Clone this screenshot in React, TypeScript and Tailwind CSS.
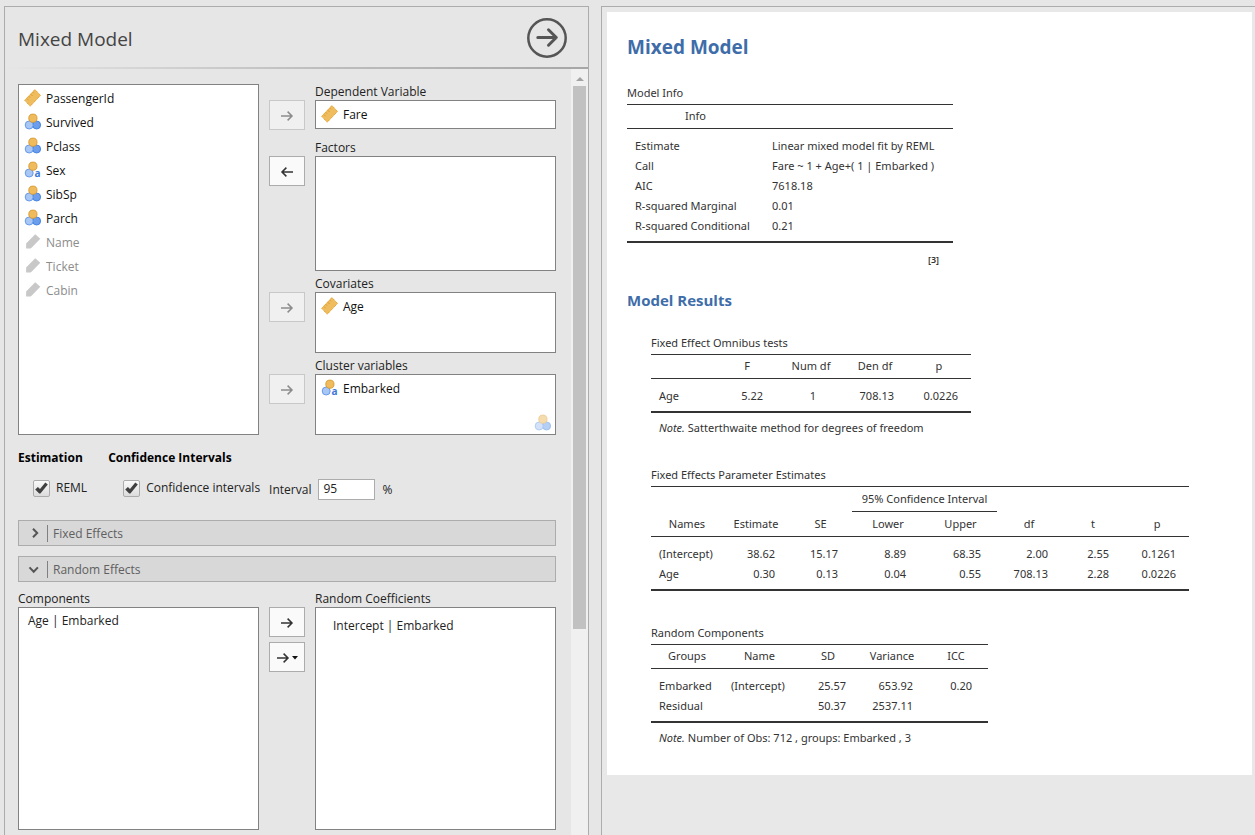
import type { ReactNode } from "react";

type Kind = "ruler" | "circles" | "text" | "pencil";

function VarIcon({ kind }: { kind: Kind }) {
  if (kind === "ruler") {
    return (
      <svg width="17" height="18" viewBox="0 0 17 18" aria-hidden="true">
        <path d="M10.9 0.6 16.5 6.4 6.2 17.2 0.7 11.3Z" fill="#f0bd5e" stroke="#e3a02f" strokeWidth="1" strokeDasharray="1.4 0.6" />
        <path d="M2.8 9.4l1.8 1.8M4.8 7.2l1.3 1.4M6.8 5.2l1.8 1.8M8.8 3.1l1.3 1.3" stroke="#d8982c" strokeWidth="0.9" />
      </svg>
    );
  }
  if (kind === "pencil") {
    return (
      <svg width="17" height="18" viewBox="0 0 17 18" aria-hidden="true">
        <path d="M11.2 1.2 16.3 5.7 7.8 14.6 6.5 15.4H2.1V10.6Z" fill="#c8c8c8" />
      </svg>
    );
  }
  return (
    <svg width="17" height="18" viewBox="0 0 17 18" className="overflow-visible" aria-hidden="true">
      {kind === "circles" && <circle cx="12.6" cy="12" r="4" fill="#6d9eeb" stroke="#3c7fe0" strokeWidth="0.9" />}
      <circle cx="5.2" cy="12" r="4" fill="#a9c7f5" stroke="#5b93ea" strokeWidth="0.9" />
      <circle cx="8.9" cy="5.2" r="4.1" fill="#efbb5c" stroke="#d89a30" strokeWidth="0.9" />
      {kind === "text" && (
        <text x="10.6" y="15.6" fontSize="10" fontWeight="700" fill="#3c78d8" fontFamily="Open Sans, sans-serif">
          a
        </text>
      )}
    </svg>
  );
}

function VarItem({ kind, name, muted = false }: { kind: Kind; name: string; muted?: boolean }) {
  return (
    <li className={muted ? "flex h-6 items-center gap-[5px] text-[#8c8c8c]" : "flex h-6 items-center gap-[5px] text-[#111111]"}>
      <span className="-mt-[3px]">
        <VarIcon kind={kind} />
      </span>
      {name}
    </li>
  );
}

function Arrow() {
  return (
    <svg width="14" height="12" viewBox="0 0 14 12" fill="none" stroke="currentColor" strokeWidth="1.5" aria-hidden="true">
      <path d="M1 6H12M7.6 1.6 12 6 7.6 10.4" />
    </svg>
  );
}

function MoveButton({ label, disabled = false, back = false, menu = false }: { label: string; disabled?: boolean; back?: boolean; menu?: boolean }) {
  return (
    <button
      type="button"
      aria-label={label}
      disabled={disabled}
      className={
        disabled
          ? "flex h-[30px] w-9 shrink-0 items-center justify-center border border-[#c8c8c8] bg-[#f0f0f0] pt-[2px] text-[#8c8c8c]"
          : "flex h-[30px] w-9 shrink-0 items-center justify-center gap-[2px] border border-[#acacac] bg-[#fafafa] pt-[2px] text-[#333333]"
      }
    >
      <span className={back ? "rotate-180" : ""}>
        <Arrow />
      </span>
      {menu && (
        <svg width="6" height="4" viewBox="0 0 6 4" aria-hidden="true">
          <path d="M0 0H6L3 3.5Z" fill="#111111" />
        </svg>
      )}
    </button>
  );
}

function Target({ label, box, back = false, children }: { label: string; box: string; back?: boolean; children?: ReactNode }) {
  return (
    <div className="flex items-start gap-[10px]">
      <div className="pt-4">
        <MoveButton label={"Move to " + label} disabled={!back} back={back} />
      </div>
      <div className="min-w-0 flex-1">
        <h2 className="h-4 leading-4">{label}</h2>
        <ul className={"relative border border-[#828282] bg-white pt-[2px] pl-[5px] " + box}>{children}</ul>
      </div>
    </div>
  );
}

function Tick({ label }: { label: string }) {
  return (
    <label className="flex items-center gap-[6px]">
      <span className="relative flex h-[17px] w-[17px]">
        <input type="checkbox" defaultChecked className="peer h-[17px] w-[17px] appearance-none rounded-[2px] border border-[#acacac] bg-linear-to-b from-[#fafafa] to-[#dcdcdc]" />
        <svg className="pointer-events-none absolute inset-0 hidden peer-checked:block" width="17" height="17" viewBox="0 0 17 17" aria-hidden="true">
          <path d="M2.2 9.4 4.9 6.9 7 8.9 12.3 2.6 14.8 4.6 7.4 13.6H6.2Z" fill="#404040" />
        </svg>
      </span>
      {label}
    </label>
  );
}

function Section({ title, open = false }: { title: string; open?: boolean }) {
  return (
    <button type="button" aria-expanded={open} className="flex h-[26px] w-full items-center border border-[#acacac] bg-[#d8d8d8] pl-[9px] text-left text-[#606060]">
      <svg width="14" height="12" viewBox="0 0 14 12" fill="none" stroke="#555555" strokeWidth="2" aria-hidden="true">
        {open ? <path d="M1.5 4.4 5.7 8.8 9.9 4.4" /> : <path d="M5 1.7 9.2 6 5 10.3" />}
      </svg>
      <span className="ml-[5px] border-l border-[#808080] pl-[5px] leading-[17px]">{title}</span>
    </button>
  );
}

function Caption({ children }: { children: ReactNode }) {
  return <caption className="pt-[2px] text-left leading-[22px] whitespace-nowrap">{children}</caption>;
}

const TABLE = "table-fixed border-separate border-spacing-0 border-b-2 border-[#333333]";
const HEAD = "h-[25px] border-y border-[#333333] p-0 text-center font-normal whitespace-nowrap";

type Column = { w: string; cell: string };

const LEFT = "pl-2 text-left";

function Cols({ cols }: { cols: Column[] }) {
  return (
    <colgroup>
      {cols.map((c, i) => (
        <col key={i} className={c.w} />
      ))}
    </colgroup>
  );
}

function Body({ cols, rows }: { cols: Column[]; rows: string[][] }) {
  return (
    <tbody>
      <tr>
        <td colSpan={cols.length} className="h-[7px] p-0" />
      </tr>
      {rows.map((row, r) => (
        <tr key={r}>
          {row.map((v, i) => (
            <td key={i} className={"h-5 py-0 leading-5 whitespace-nowrap " + cols[i].cell}>
              {v}
            </td>
          ))}
        </tr>
      ))}
      <tr>
        <td colSpan={cols.length} className="h-[5px] p-0" />
      </tr>
    </tbody>
  );
}

const infoCols: Column[] = [
  { w: "w-[137px]", cell: LEFT },
  { w: "w-[189px]", cell: LEFT },
];

const omnibusCols: Column[] = [
  { w: "w-16", cell: LEFT },
  { w: "w-16", cell: "pr-4 text-right" },
  { w: "w-16", cell: "pl-1 text-center" },
  { w: "w-16", cell: "pr-[13px] text-right" },
  { w: "w-16", cell: "pr-[13px] text-right" },
];

const estimateCols: Column[] = [
  { w: "w-[72px]", cell: LEFT },
  { w: "w-[66px]", cell: "pr-[14px] text-right" },
  { w: "w-[63px]", cell: "pr-[14px] text-right" },
  { w: "w-[72px]", cell: "pr-[18px] text-right" },
  { w: "w-[73px]", cell: "pr-4 text-right" },
  { w: "w-16", cell: "pr-[13px] text-right" },
  { w: "w-16", cell: "pr-4 text-right" },
  { w: "w-16", cell: "pr-[13px] text-right" },
];

const componentCols: Column[] = [
  { w: "w-[72px]", cell: LEFT },
  { w: "w-[73px]", cell: LEFT },
  { w: "w-16", cell: "pr-[14px] text-right" },
  { w: "w-16", cell: "pr-[11px] text-right" },
  { w: "w-16", cell: "pr-4 text-right" },
];

function Options() {
  return (
    <section className="flex w-[585px] shrink-0 flex-col border border-b-0 border-[#acacac] text-[12px]">
      <header className="flex h-[60px] shrink-0 items-center justify-between pr-[21px] pl-[13px]">
        <h1 className="pt-1 text-[19px] text-[#444444]">Mixed Model</h1>
        <button type="button" aria-label="Close options" className="pt-[2px]">
          <svg width="40" height="40" viewBox="0 0 40 40" fill="none" stroke="#555555" aria-hidden="true">
            <circle cx="20" cy="20" r="18.7" strokeWidth="2.5" />
            <path d="M10.8 19.5H29M21.5 11.8 29.3 19.5 21.5 27.2" strokeWidth="3" strokeLinecap="round" strokeLinejoin="round" />
          </svg>
        </button>
      </header>
      <div className="h-[2px] shrink-0 bg-linear-to-r from-[#e6e6e6] via-[#c0c0c0] to-[#a6a6a6]" />
      <div className="flex min-h-0 flex-1">
        <div className="min-w-0 flex-1 overflow-hidden pt-[15px] pr-[15px] pl-[13px] text-[#222222]">
          <div className="flex gap-[10px]">
            <ul className="h-[351px] flex-1 border border-[#828282] bg-white pt-[2px] pl-[5px]">
              <VarItem kind="ruler" name="PassengerId" />
              <VarItem kind="circles" name="Survived" />
              <VarItem kind="circles" name="Pclass" />
              <VarItem kind="text" name="Sex" />
              <VarItem kind="circles" name="SibSp" />
              <VarItem kind="circles" name="Parch" />
              <VarItem kind="pencil" name="Name" muted />
              <VarItem kind="pencil" name="Ticket" muted />
              <VarItem kind="pencil" name="Cabin" muted />
            </ul>
            <div className="flex w-[287px] flex-col gap-[5px]">
              <div className="pb-[5px]">
                <Target label="Dependent Variable" box="h-[29px]">
                  <VarItem kind="ruler" name="Fare" />
                </Target>
              </div>
              <Target label="Factors" box="h-[115px]" back />
              <Target label="Covariates" box="h-[61px]">
                <VarItem kind="ruler" name="Age" />
              </Target>
              <Target label="Cluster variables" box="h-[61px]">
                <VarItem kind="text" name="Embarked" />
                <li className="absolute right-1 bottom-[2px] opacity-50" aria-label="Nominal variables">
                  <VarIcon kind="circles" />
                </li>
              </Target>
            </div>
          </div>

          <div className="mt-[14px] flex gap-[21px]">
            <div>
              <h2 className="leading-[18px] font-bold text-black">Estimation</h2>
              <div className="mt-[7px] flex h-7 items-center pl-[15px]">
                <Tick label="REML" />
              </div>
            </div>
            <div>
              <h2 className="leading-[18px] font-bold text-black">Confidence Intervals</h2>
              <div className="mt-[7px] flex h-7 items-center gap-[9px] pl-[15px]">
                <Tick label="Confidence intervals" />
                <label className="flex items-center gap-[7px] pt-[3px]">
                  Interval
                  <input type="text" defaultValue="95" className="h-[21px] w-[57px] border border-[#acacac] bg-white pb-[2px] pl-1 text-[#222222]" />
                  %
                </label>
              </div>
            </div>
          </div>

          <div className="mt-[18px] flex flex-col gap-[10px]">
            <Section title="Fixed Effects" />
            <Section title="Random Effects" open />
          </div>

          <div className="mt-[9px] flex gap-[10px]">
            <div className="flex-1">
              <h2 className="h-4 leading-4">Components</h2>
              <ul className="h-[223px] border border-[#828282] bg-white pt-1 pl-[9px] text-[#222222]">
                <li className="leading-[18px]">Age | Embarked</li>
              </ul>
            </div>
            <div className="flex flex-col gap-[5px] pt-4">
              <MoveButton label="Add coefficient" />
              <MoveButton label="Add interaction" menu />
            </div>
            <div className="flex-1">
              <h2 className="h-4 leading-4">Random Coefficients</h2>
              <ul className="h-[223px] border border-[#828282] bg-white pt-[9px] pl-[17px] text-[#222222]">
                <li className="leading-[18px]">Intercept | Embarked</li>
              </ul>
            </div>
          </div>
        </div>
        <div className="flex w-[17px] shrink-0 flex-col items-center bg-[#f0f0f0]" aria-hidden="true">
          <div className="flex h-[17px] items-center pt-[2px]">
            <svg width="8" height="4" viewBox="0 0 8 4">
              <path d="M0 4 4 0 8 4Z" fill="#a3a3a3" />
            </svg>
          </div>
          <div className="h-[543px] w-[13px] bg-[#c1c1c1]" />
        </div>
      </div>
    </section>
  );
}

function Results() {
  return (
    <main className="min-w-0 flex-1 border border-r-0 border-b-0 border-[#acacac] bg-[#e8e8e8] pt-[5px] pr-[3px] pl-[5px]">
      <article className="bg-white px-5 pt-[23px] pb-[27px] font-['Noto_Sans','Open_Sans',sans-serif] text-[11px] text-[#333333]">
        <h1 className="font-['Open_Sans','Noto_Sans',sans-serif] text-[19px] leading-6 font-bold text-[#3e6da9]">Mixed Model</h1>

        <table className={TABLE + " mt-[21px] w-[326px]"}>
          <Caption>Model Info</Caption>
          <Cols cols={infoCols} />
          <thead>
            <tr>
              <th className={HEAD}>Info</th>
              <th className={HEAD} />
            </tr>
          </thead>
          <Body
            cols={infoCols}
            rows={[
              ["Estimate", "Linear mixed model fit by REML"],
              ["Call", "Fare ~ 1 + Age+( 1 | Embarked )"],
              ["AIC", "7618.18"],
              ["R-squared Marginal", "0.01"],
              ["R-squared Conditional", "0.21"],
            ]}
          />
        </table>
        <p className="mt-[9px] w-[312px] text-right text-[9px] leading-4 font-semibold">[3]</p>

        <h2 className="mt-[20px] font-['Open_Sans','Noto_Sans',sans-serif] text-[15px] leading-6 font-bold text-[#3e6da9]">Model Results</h2>

        <div className="pl-6">
          <table className={TABLE + " mt-[18px] w-[320px]"}>
            <Caption>Fixed Effect Omnibus tests</Caption>
            <Cols cols={omnibusCols} />
            <thead>
              <tr>
                <th className={HEAD} />
                <th className={HEAD}>F</th>
                <th className={HEAD}>Num df</th>
                <th className={HEAD}>Den df</th>
                <th className={HEAD}>p</th>
              </tr>
            </thead>
            <Body cols={omnibusCols} rows={[["Age", "5.22", "1", "708.13", "0.0226"]]} />
          </table>
          <p className="mt-[5px] pl-2 leading-5">
            <em>Note.</em> Satterthwaite method for degrees of freedom
          </p>

          <table className={TABLE + " mt-6 w-[538px]"}>
            <Caption>Fixed Effects Parameter Estimates</Caption>
            <Cols cols={estimateCols} />
            <thead>
              <tr>
                <th className="h-[26px] border-t border-[#333333] p-0" colSpan={3} />
                <th className="h-[26px] border-y border-[#333333] p-0 text-center font-normal whitespace-nowrap" colSpan={2}>
                  95% Confidence Interval
                </th>
                <th className="h-[26px] border-t border-[#333333] p-0" colSpan={3} />
              </tr>
              <tr>
                {["Names", "Estimate", "SE", "Lower", "Upper", "df", "t", "p"].map((h) => (
                  <th key={h} className="h-[25px] border-b border-[#333333] p-0 text-center font-normal">
                    {h}
                  </th>
                ))}
              </tr>
            </thead>
            <Body
              cols={estimateCols}
              rows={[
                ["(Intercept)", "38.62", "15.17", "8.89", "68.35", "2.00", "2.55", "0.1261"],
                ["Age", "0.30", "0.13", "0.04", "0.55", "708.13", "2.28", "0.0226"],
              ]}
            />
          </table>

          <table className={TABLE + " mt-[29px] w-[337px]"}>
            <Caption>Random Components</Caption>
            <Cols cols={componentCols} />
            <thead>
              <tr>
                {["Groups", "Name", "SD", "Variance", "ICC"].map((h) => (
                  <th key={h} className={HEAD}>
                    {h}
                  </th>
                ))}
              </tr>
            </thead>
            <Body
              cols={componentCols}
              rows={[
                ["Embarked", "(Intercept)", "25.57", "653.92", "0.20"],
                ["Residual", "", "50.37", "2537.11", ""],
              ]}
            />
          </table>
          <p className="mt-[5px] pl-2 leading-5">
            <em>Note.</em> Number of Obs: 712 , groups: Embarked , 3
          </p>
        </div>
      </article>
    </main>
  );
}

export default function App() {
  return (
    <div className="flex h-screen gap-3 overflow-hidden bg-[#e6e6e6] pt-[6px] pl-1 font-['Open_Sans','Noto_Sans',sans-serif]">
      <Options />
      <Results />
    </div>
  );
}
